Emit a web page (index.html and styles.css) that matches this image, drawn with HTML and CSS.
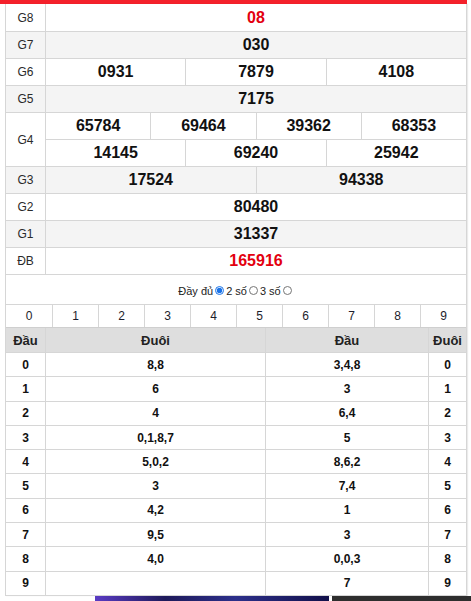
FILE: index.html
```html
<!DOCTYPE html>
<html lang="vi">
<head>
<meta charset="utf-8">
<link rel="stylesheet" href="styles.css">
</head>
<body>
<div class="topbar"></div>
<div class="wrap">
  <div class="kq">
    <div class="row first"><div class="lbl">G8</div><div class="vals"><div class="v red">08</div></div></div>
    <div class="row alt"><div class="lbl">G7</div><div class="vals"><div class="v">030</div></div></div>
    <div class="row"><div class="lbl">G6</div><div class="vals"><div class="v">0931</div><div class="v">7879</div><div class="v">4108</div></div></div>
    <div class="row alt"><div class="lbl">G5</div><div class="vals"><div class="v">7175</div></div></div>
    <div class="row double"><div class="lbl">G4</div>
      <div class="vals stack">
        <div class="sub"><div class="v">65784</div><div class="v">69464</div><div class="v">39362</div><div class="v">68353</div></div>
        <div class="sub"><div class="v">14145</div><div class="v">69240</div><div class="v">25942</div></div>
      </div>
    </div>
    <div class="row alt"><div class="lbl">G3</div><div class="vals"><div class="v">17524</div><div class="v">94338</div></div></div>
    <div class="row"><div class="lbl">G2</div><div class="vals"><div class="v">80480</div></div></div>
    <div class="row alt"><div class="lbl">G1</div><div class="vals"><div class="v">31337</div></div></div>
    <div class="row"><div class="lbl">ĐB</div><div class="vals"><div class="v red">165916</div></div></div>
  </div>

  <div class="opts">
    <span>Đầy đủ</span><input type="radio" name="m" checked><span>2 số</span><input type="radio" name="m"><span>3 số</span><input type="radio" name="m">
  </div>

  <div class="digits">
    <div>0</div><div>1</div><div>2</div><div>3</div><div>4</div><div>5</div><div>6</div><div>7</div><div>8</div><div>9</div>
  </div>

  <div class="loto">
    <div class="lr head"><div>Đầu</div><div>Đuôi</div><div>Đầu</div><div>Đuôi</div></div>
    <div class="lr"><div>0</div><div>8,8</div><div>3,4,8</div><div>0</div></div>
    <div class="lr"><div>1</div><div>6</div><div>3</div><div>1</div></div>
    <div class="lr"><div>2</div><div>4</div><div>6,4</div><div>2</div></div>
    <div class="lr"><div>3</div><div>0,1,8,7</div><div>5</div><div>3</div></div>
    <div class="lr"><div>4</div><div>5,0,2</div><div>8,6,2</div><div>4</div></div>
    <div class="lr"><div>5</div><div>3</div><div>7,4</div><div>5</div></div>
    <div class="lr"><div>6</div><div>4,2</div><div>1</div><div>6</div></div>
    <div class="lr"><div>7</div><div>9,5</div><div>3</div><div>7</div></div>
    <div class="lr"><div>8</div><div>4,0</div><div>0,0,3</div><div>8</div></div>
    <div class="lr"><div>9</div><div></div><div>7</div><div>9</div></div>
  </div>
</div>
<div class="strip"><div class="img1"></div><div class="img2"></div></div>
</body>
</html>
```

FILE: styles.css
```css
* { box-sizing: border-box; }
html, body { margin: 0; padding: 0; background: #fff; }
body {
  font-family: "Liberation Sans", Arial, sans-serif;
  color: #111;
  width: 471px;
  overflow: hidden;
}
.topbar { height: 4px; width: 467px; background: #f4212b; }
.wrap {
  margin-left: 5px;
  width: 462px;
  border-left: 1px solid #d6d6d6;
  border-right: 1px solid #d6d6d6;
  box-shadow: 1px 0 1px rgba(0,0,0,0.08);
}
.row {
  display: grid;
  grid-template-columns: 40px 1fr;
  height: 27px;
  border-bottom: 1px solid #d6d6d6;
}
.row.first { height: 28px; }
.row.double { height: 54px; }
.row.alt { background: #f4f4f4; }
.lbl {
  border-right: 1px solid #d6d6d6;
  display: flex;
  align-items: center;
  justify-content: center;
  font-size: 12px;
  color: #2a2a2a;
}
.vals { display: flex; }
.vals.stack { flex-direction: column; }
.sub { display: flex; flex: 1; }
.sub:first-child { border-bottom: 1px solid #d6d6d6; }
.v {
  flex: 1;
  display: flex;
  align-items: center;
  justify-content: center;
  font-size: 16px;
  font-weight: bold;
  color: #111;
}
.v + .v { border-left: 1px solid #d6d6d6; }
.v.red { color: #e3000f; }

.opts {
  height: 29px;
  display: flex;
  align-items: center;
  justify-content: center;
  font-size: 11px;
  color: #222;
  padding-top: 2px;
}
.opts input {
  width: 9px;
  height: 9px;
  margin: 0 2px 0 2px;
  accent-color: #1a73e8;
}
.digits {
  display: grid;
  grid-template-columns: repeat(10, 1fr);
  height: 23px;
  border-top: 1px solid #d6d6d6;
}
.digits div {
  display: flex;
  align-items: center;
  justify-content: center;
  font-size: 12px;
  color: #1d1d2b;
}
.digits div + div { border-left: 1px solid #d6d6d6; }

.lr {
  display: grid;
  grid-template-columns: 40px 219px 163px 38px;
  height: 24.3px;
  border-bottom: 1px solid #d6d6d6;
}
.lr > div {
  display: flex;
  align-items: center;
  justify-content: center;
  font-size: 12px;
  font-weight: bold;
  color: #111;
}
.lr > div + div { border-left: 1px solid #d6d6d6; }
.lr > div:nth-child(2) { border-left: none; }
.lr > div:first-child { border-right: 1px solid #d6d6d6; }
.lr.head {
  height: 26px;
  background: #dedede;
  border-top: 1px solid #cfcfcf;
}
.lr.head > div { font-size: 13px; color: #222; }

.strip { display: flex; height: 5px; }
.img1 {
  margin-left: 95px;
  width: 234px;
  background: linear-gradient(90deg, #5a3bc4, #1e1a5a 30%, #2c2f8a 60%, #12104a);
}
.img2 { margin-left: 3px; width: 139px; background: #2e2e2e; }
```
